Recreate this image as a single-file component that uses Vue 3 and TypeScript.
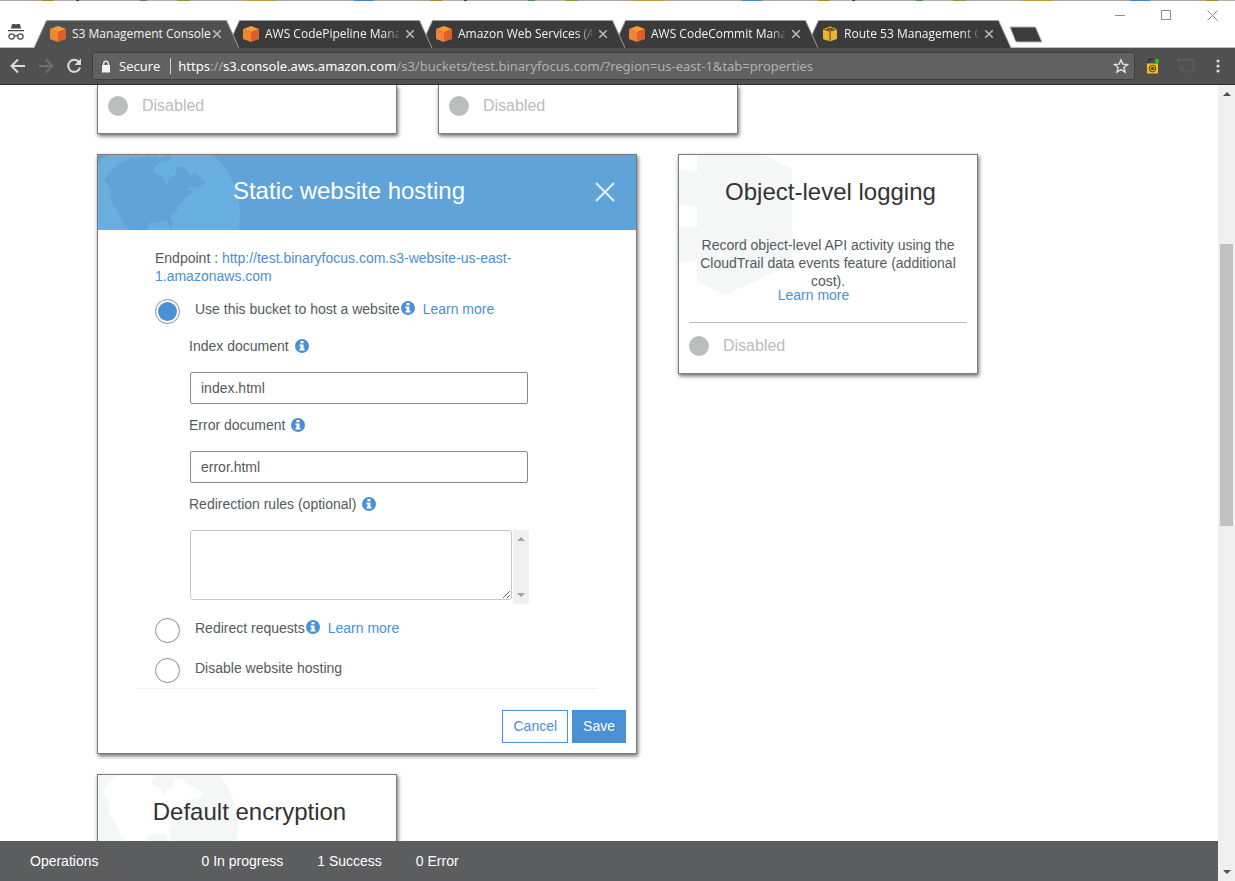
<script setup lang="ts">
import { defineComponent, h, ref } from 'vue'

interface Tab {
  title: string
  icon: 'cube' | 'box'
}

const tabs: Tab[] = [
  { title: 'S3 Management Console', icon: 'cube' },
  { title: 'AWS CodePipeline Management', icon: 'cube' },
  { title: 'Amazon Web Services (AWS)', icon: 'cube' },
  { title: 'AWS CodeCommit Management', icon: 'cube' },
  { title: 'Route 53 Management Console', icon: 'box' },
]

const hosting = ref('host')
const indexDocument = ref('index.html')
const errorDocument = ref('error.html')
const rules = ref('')

const LAND =
  'M42 300L60 276L78 258L96 246L112 240L128 232L146 236L152 228L164 236L172 226L186 231L200 227L208 238L222 228L240 226L240 241L225 240L228 249L214 243L205 250L192 262L190 276L200 282L212 285L222 296L228 315L237 302L235 290L250 291L259 279L257 261L276 262L290 268L304 286L316 279L330 292L348 309L336 315L326 322L302 320L290 330L312 331L309 341L294 347L286 355L274 368L262 378L262 392L250 400L240 408L247 425L247 445L241 447L234 428L222 424L206 429L192 425L178 432L173 450L178 470L150 480L118 449L104 430L96 416L110 449L102 440L88 410L85 395L68 375L62 355L65 335L55 318Z'

const Globe = defineComponent({
  setup: () => () =>
    h('svg', { viewBox: '24 225 450 450', 'aria-hidden': 'true' }, [
      h('circle', { class: 'sea', cx: 210, cy: 405, r: 240 }),
      h('path', { class: 'land', d: LAND }),
    ]),
})

const InfoIcon = defineComponent({
  setup: () => () =>
    h('svg', { viewBox: '0 0 14 14', 'aria-hidden': 'true' }, [
      h('circle', { cx: 7, cy: 7, r: 7, fill: '#4a90d4' }),
      h('path', { d: 'M5.5 2h3v2.200h-3zM4.500 5.400h4v4.400h1v1.800h-5V9.800h1V7.200h-1z', fill: '#fff' }),
    ]),
})
</script>

<template>
  <div class="window">
    <div class="desktop-strip"></div>
    <header class="titlebar">
      <div class="incognito">
        <svg width="18" height="18" viewBox="0 0 18 18" aria-hidden="true">
          <path d="M5.200 1h2.300l1.500.6L10.500 1h2.300l1.400 4.500H3.800zM1 7h16v1.300H1z" fill="#4a4a4a" />
          <g fill="none" stroke="#4a4a4a" stroke-width="1.200">
            <circle cx="4.600" cy="13.500" r="2.700" />
            <circle cx="13.400" cy="13.500" r="2.700" />
            <path d="M7.300 13.200q1.700-1.200 3.400 0" />
          </g>
        </svg>
      </div>
      <nav class="tabs" aria-label="Browser tabs">
        <div v-for="(tab, i) in tabs" :key="tab.title" class="tab" :class="{ active: i === 0 }" :style="{ zIndex: tabs.length - i }">
          <svg class="tab-shape" viewBox="0 0 205 28" aria-hidden="true">
            <path d="M0 28L12.500.5H192.500L205 28Z" />
            <path class="edge" d="M0 28L12.500.5H192.500L205 28" />
          </svg>
          <svg v-if="tab.icon === 'cube'" class="favicon" viewBox="0 0 16 16" aria-hidden="true">
            <path d="M8 0l8 3-8 3.200L0 3z" fill="#f69b35" />
            <path d="M0 3l8 3.200V16l-8-3z" fill="#f08536" />
            <path d="M16 3L8 6.200V16l8-3z" fill="#dd5f2a" />
          </svg>
          <svg v-else class="favicon" viewBox="0 0 16 16" aria-hidden="true">
            <path d="M1 3l7-2.500L15 3v10l-7 2.500L1 13z" fill="#e9b335" />
            <path d="M1 3l7 2 7-2M4.500 1.800l7 2.200M11.500 1.800L4.500 4M8 5v10.500" stroke="#5e4615" fill="none" />
          </svg>
          <button class="tab-title" type="button">{{ tab.title }}</button>
          <button class="tab-close" type="button" aria-label="Close tab">
            <svg width="8" height="8" viewBox="0 0 8 8"><path d="M0 0l8 8M8 0L0 8" stroke="#bcbcbc" stroke-width="1.500" /></svg>
          </button>
        </div>
      </nav>
      <button class="new-tab" type="button" aria-label="New tab">
        <svg width="34" height="17" viewBox="0 0 34 17">
          <path d="M1 1H26.500L33 16H8Q7 16 6.500 15Z" fill="#3c3c3c" stroke="#b8b8b8" />
        </svg>
      </button>
      <div class="window-controls">
        <button type="button" aria-label="Minimize"><svg width="11" height="11" viewBox="0 0 11 11"><path d="M0 5.500h10" stroke="#8a8a8a" /></svg></button>
        <button type="button" aria-label="Maximize"><svg width="11" height="11" viewBox="0 0 11 11"><path d="M.5.5h9v9h-9z" stroke="#8a8a8a" fill="none" /></svg></button>
        <button type="button" aria-label="Close"><svg width="11" height="11" viewBox="0 0 11 11"><path d="M.5.5l10 10M10.500.5l-10 10" stroke="#8a8a8a" /></svg></button>
      </div>
    </header>

    <div class="toolbar">
      <button class="nav-button" type="button" aria-label="Back">
        <svg width="16" height="16" viewBox="0 0 16 16"><path d="M15 8H2M8 1.500L1.500 8 8 14.500" stroke="#dcdcdc" stroke-width="2" fill="none" /></svg>
      </button>
      <button class="nav-button" type="button" aria-label="Forward">
        <svg width="16" height="16" viewBox="0 0 16 16"><path d="M1 8h13M8 1.500L14.500 8 8 14.500" stroke="#6f6f6f" stroke-width="2" fill="none" /></svg>
      </button>
      <button class="nav-button" type="button" aria-label="Reload">
        <svg width="16" height="16" viewBox="0 0 16 16">
          <path d="M13.300 4.600A6 6 0 1 0 14 9.500" stroke="#dcdcdc" stroke-width="2" fill="none" />
          <path d="M15 .5V7H8.500z" fill="#dcdcdc" />
        </svg>
      </button>
      <div class="omnibox">
        <svg class="lock" width="10" height="13" viewBox="0 0 10 13" aria-hidden="true">
          <path d="M1 5h8v7.500H1z" fill="#f4f4f4" /><path d="M2.700 6V3.500a2.300 2.300 0 0 1 4.600 0V6" stroke="#f4f4f4" stroke-width="1.300" fill="none" />
        </svg>
        <span class="secure">Secure</span>
        <div class="url" role="textbox" tabindex="0" aria-label="Address"><b>https</b>://<b>s3.console.aws.amazon.com</b>/s3/buckets/test.binaryfocus.com/?region=us-east-1&amp;tab=properties</div>
        <button class="star" type="button" aria-label="Bookmark this page">
          <svg width="16" height="16" viewBox="0 0 16 16"><path d="M8 1.800l1.800 4.300 4.700.4-3.600 3 1.200 4.600L8 11.600l-4.100 2.500 1.200-4.600-3.600-3 4.700-.4z" stroke="#e2e2e2" stroke-width="1.400" fill="none" /></svg>
        </button>
      </div>
      <div class="extensions">
        <button type="button" aria-label="Password extension">
          <svg width="16" height="16" viewBox="0 0 16 16">
            <path d="M3.500 6V3.500q0-2.500 4-2.500" stroke="#2f2f2f" stroke-width="1.600" fill="none" />
            <path d="M2 5.500h11v10H2z" fill="#efc11b" />
            <circle cx="7.500" cy="10.500" r="3.300" fill="none" stroke="#4c3c06" />
            <path d="M6.200 12V9.500h2.600V12M7.500 9.500V12" fill="none" stroke="#4c3c06" />
            <circle cx="12" cy="3" r="2.200" fill="#17c71c" />
          </svg>
        </button>
        <button type="button" aria-label="Cast">
          <svg width="18" height="16" viewBox="0 0 18 16" fill="none" stroke="#5e5e5e" stroke-width="1.500"><path d="M1.500 5V1.700h15v12H11M1.500 8a6 6 0 0 1 6 6M1.500 11a3 3 0 0 1 3 3" /></svg>
        </button>
        <button type="button" aria-label="Menu">
          <svg width="4" height="14" viewBox="0 0 4 14" fill="#dcdcdc"><circle cx="2" cy="2" r="1.600" /><circle cx="2" cy="7" r="1.600" /><circle cx="2" cy="12" r="1.600" /></svg>
        </button>
      </div>
    </div>

    <div class="viewport">
      <div class="page">
        <main class="content">
          <div class="row">
            <section class="card clipped"><p class="status"><i></i>Disabled</p></section>
            <section class="card clipped"><p class="status"><i></i>Disabled</p></section>
          </div>

          <div class="row">
            <section class="card wide">
              <header class="card-header">
                <Globe class="globe" />
                <h2>Static website hosting</h2>
                <button class="card-close" type="button" aria-label="Close">
                  <svg width="20" height="20" viewBox="0 0 20 20"><path d="M1 1l18 18M19 1L1 19" stroke="#e6f0f8" stroke-width="2" /></svg>
                </button>
              </header>
              <form class="hosting" @submit.prevent>
                <p class="endpoint">Endpoint : <a href="#">http://test.binaryfocus.com.s3-website-us-east-1.amazonaws.com</a></p>

                <div class="choice">
                  <input id="host" v-model="hosting" type="radio" name="hosting" value="host" />
                  <label for="host">Use this bucket to host a website</label>
                  <InfoIcon class="info tight" />
                  <a href="#">Learn more</a>
                </div>

                <div class="fields">
                  <div class="field">
                    <label for="index">Index document</label><InfoIcon class="info" />
                  </div>
                  <input id="index" v-model="indexDocument" type="text" />
                  <div class="field">
                    <label for="error">Error document</label><InfoIcon class="info" />
                  </div>
                  <input id="error" v-model="errorDocument" type="text" />
                  <div class="field">
                    <label for="rules">Redirection rules (optional)</label><InfoIcon class="info" />
                  </div>
                  <div class="rules">
                    <textarea id="rules" v-model="rules"></textarea>
                    <div class="mini-scroll">
                      <svg width="8" height="4" viewBox="0 0 8 4"><path d="M4 0l4 4H0z" fill="#a3a3a3" /></svg>
                      <svg width="8" height="4" viewBox="0 0 8 4"><path d="M0 0h8L4 4z" fill="#a3a3a3" /></svg>
                    </div>
                  </div>
                </div>

                <div class="choice">
                  <input id="redirect" v-model="hosting" type="radio" name="hosting" value="redirect" />
                  <label for="redirect">Redirect requests</label>
                  <InfoIcon class="info tight" />
                  <a href="#">Learn more</a>
                </div>
                <div class="choice last">
                  <input id="disable" v-model="hosting" type="radio" name="hosting" value="disable" />
                  <label for="disable">Disable website hosting</label>
                </div>
              </form>
              <hr class="divider" />
              <div class="actions">
                <button class="cancel" type="button">Cancel</button>
                <button class="save" type="button">Save</button>
              </div>
            </section>

            <section class="card logging">
              <svg class="bucket" width="113" height="140" viewBox="0 0 113 140" fill="#f5f7f7" aria-hidden="true">
                <path d="M18 0H85L113 14V109L46 140L18 127V105L6 108L0 106V72H18V51L0 50V16L5 15L18 17Z" />
              </svg>
              <h2>Object-level logging</h2>
              <p class="description">Record object-level API activity using the CloudTrail data events feature (additional cost).</p>
              <p class="more"><a href="#">Learn more</a></p>
              <p class="status"><i></i>Disabled</p>
            </section>
          </div>

          <div class="row">
            <section class="card encryption">
              <Globe class="globe" />
              <h2>Default encryption</h2>
            </section>
          </div>
        </main>

        <footer class="operations">
          <strong>Operations</strong>
          <span>0 In progress</span>
          <span>1 Success</span>
          <span>0 Error</span>
        </footer>
      </div>

      <div class="scrollbar" aria-hidden="true">
        <svg width="8" height="4" viewBox="0 0 8 4"><path d="M4 0l4 4H0z" fill="#505050" /></svg>
        <div class="track">
          <div class="thumb"></div>
        </div>
        <svg width="8" height="4" viewBox="0 0 8 4"><path d="M0 0h8L4 4z" fill="#505050" /></svg>
      </div>
    </div>
  </div>
</template>

<style>
body {
  margin: 0;
  overflow: hidden;
}
</style>

<style scoped>
* {
  box-sizing: border-box;
}
.window {
  display: flex;
  flex-direction: column;
  height: 100vh;
  background: #fff;
  font: 14px/18px "Liberation Sans", Arial, sans-serif;
  color: #545b5e;
}
button {
  padding: 0;
  border: 0;
  background: none;
  font: inherit;
  color: inherit;
}
svg {
  display: block;
  flex: none;
}
h2,
p {
  margin: 0;
}
h2 {
  font-size: 24px;
  line-height: 28px;
  font-weight: 400;
  text-align: center;
}
a {
  color: #4a90d4;
  text-decoration: none;
}

.desktop-strip {
  flex: none;
  height: 1px;
  background: repeating-linear-gradient(90deg, #a9a6a4 0 42px, #a58a2c 42px 54px, #b3b0ae 54px 76px, #3c3936 76px 79px, #a9a6a4 79px 140px, #4a8a4c 140px 147px, #b3b0ae 147px 177px, #7a9a34 177px 190px, #a9a6a4 190px 246px, #b99a3a 246px 276px, #a9a6a4 276px 354px, #4b87b4 354px 374px, #a9a6a4 374px 388px);
}
.titlebar {
  display: flex;
  flex: none;
  height: 47px;
  border-bottom: 1px solid #b9bfba;
  font: 12px/16px "Open Sans", "Noto Sans", sans-serif;
}
.incognito {
  flex: none;
  width: 34px;
  padding: 22px 0 0 7px;
}
.tabs {
  display: flex;
  padding-top: 19px;
}
.tab {
  position: relative;
  display: flex;
  align-items: center;
  width: 205px;
  height: 28px;
  margin-right: -12px;
  padding-left: 16px;
  color: #f2f2f2;
}
.tab-shape {
  position: absolute;
  inset: 0;
  width: 205px;
  height: 28px;
  fill: #3b3b3b;
}
.tab-shape .edge {
  fill: none;
  stroke: #9a9e9b;
}
.active .tab-shape {
  fill: #505050;
}
.favicon {
  position: relative;
  width: 16px;
  height: 16px;
}
.tab-title {
  position: relative;
  width: 134px;
  margin-left: 6px;
  overflow: hidden;
  white-space: nowrap;
  text-align: left;
  -webkit-mask-image: linear-gradient(90deg, #000 118px, transparent 138px);
  mask-image: linear-gradient(90deg, #000 118px, transparent 138px);
}
.active .tab-title {
  overflow: visible;
  -webkit-mask-image: none;
  mask-image: none;
}
.tab-close {
  position: relative;
  margin-left: 7px;
}
.new-tab {
  align-self: flex-start;
  margin: 25px 0 0 10px;
}
.window-controls {
  display: flex;
  align-items: flex-start;
  gap: 35px;
  margin-left: auto;
  padding: 9px 17px 0 0;
}

.toolbar {
  display: flex;
  flex: none;
  align-items: center;
  height: 37px;
  padding: 0 15px 0 10px;
  border-bottom: 1px solid #2d2d2d;
  background: #505050;
  font: 13px/18px "Open Sans", "Noto Sans", sans-serif;
}
.nav-button {
  margin-right: 12px;
}
.omnibox {
  display: flex;
  flex: 1;
  align-items: center;
  height: 28px;
  margin-left: -2px;
  padding: 0 5px 0 8px;
  border: 1px solid #3e3e3e;
  border-radius: 2px;
  background: #616161;
  color: #fff;
}
.secure {
  margin-left: 8px;
  padding-right: 10px;
  border-right: 1px solid #cfcfcf;
  line-height: 16px;
}
.url {
  flex: 1;
  min-width: 0;
  margin-left: 7px;
  overflow: hidden;
  white-space: nowrap;
  font-family: "Noto Sans", "Open Sans", sans-serif;
  color: #b0b0b0;
}
.url b {
  font-weight: 400;
  color: #fff;
}
.extensions {
  display: flex;
  align-items: center;
  margin-left: 10px;
}
.extensions button {
  margin-right: 16px;
}
.extensions button:last-child {
  margin: 0 0 0 5px;
}

.viewport {
  display: flex;
  flex: 1;
  min-height: 0;
}
.page {
  display: flex;
  flex: 1;
  flex-direction: column;
  min-width: 0;
}
.content {
  display: flex;
  flex: 1;
  flex-direction: column;
  gap: 20px;
  min-height: 0;
  padding-left: 97px;
  overflow: hidden;
}
.row {
  display: flex;
  flex: none;
  align-items: flex-start;
  gap: 41px;
}
.card {
  position: relative;
  width: 300px;
  border: 1px solid #7b7c7d;
  background: #fff;
  box-shadow: 1px 2px 4px rgba(0, 0, 0, 0.6);
}
.card h2 {
  position: relative;
  color: #333;
}
.status {
  display: flex;
  align-items: center;
  gap: 14px;
  font-size: 16px;
  line-height: 20px;
  color: #bbbdbd;
}
.status i {
  width: 20px;
  height: 20px;
  border-radius: 50%;
  background: #bcbebd;
}
.clipped {
  padding: 11px 10px 17px;
  border-top: 0;
}

.wide {
  width: 540px;
}
.card-header {
  position: relative;
  display: flex;
  align-items: flex-start;
  height: 75px;
  padding: 22px 21px 0 5px;
  overflow: hidden;
  background: #60a3d9;
}
.card .card-header h2 {
  flex: 1;
  color: #fff;
}
.card-close {
  margin-top: 5px;
}
.globe {
  position: absolute;
  top: 0;
  left: 0;
  width: 150px;
  height: 150px;
}
.globe :deep(.sea) {
  fill: #69b0e1;
}
.globe :deep(.land) {
  fill: #60a3d9;
}
.hosting {
  padding: 19px 107px 5px 57px;
}
.endpoint {
  margin-bottom: 14px;
}
.choice {
  display: flex;
  align-items: flex-start;
  height: 25px;
  line-height: 20px;
}
.choice input {
  flex: none;
  width: 25px;
  height: 25px;
  margin: 0 15px 0 0;
  border: 1px solid #8a8e90;
  border-radius: 50%;
  appearance: none;
  background: #fff;
}
.choice input:checked {
  padding: 2px;
  background: #4a90d4 content-box;
}
.choice.last {
  margin-top: 15px;
}
.info {
  width: 14px;
  height: 14px;
  margin-left: 6px;
}
.info.tight {
  margin: 2px 8px 0 1px;
}
.fields {
  padding: 1px 0 14px 35px;
}
.field {
  display: flex;
  align-items: center;
  margin: 12px 0 17px -1px;
}
.fields input {
  display: block;
  width: 338px;
  height: 32px;
  padding: 0 10px;
  border: 1px solid #85898c;
  border-radius: 2px;
  background: #fff;
  font: inherit;
  color: inherit;
}
.rules {
  display: flex;
  align-items: flex-start;
}
.rules textarea {
  width: 322px;
  height: 70px;
  margin: 0 1px 0 0;
  padding: 6px 10px;
  border: 1px solid #c5c7c8;
  border-radius: 3px;
  font: inherit;
  color: inherit;
  resize: both;
}
.mini-scroll {
  display: flex;
  flex-direction: column;
  align-items: center;
  justify-content: space-between;
  width: 16px;
  height: 74px;
  padding: 7px 0;
  background: #f0f0f0;
}
.divider {
  height: 1px;
  margin: 0 38px;
  border: 0;
  background: #f0f1f1;
}
.actions {
  display: flex;
  justify-content: flex-end;
  gap: 4px;
  padding: 21px 10px 10px;
}
.actions button {
  height: 33px;
  padding: 0 10px 1px;
  border: 1px solid #4a90d4;
  color: #4a90d4;
}
.actions .save {
  background: #4a90d4;
  color: #fff;
}

.logging {
  padding: 23px 10px 17px;
}
.bucket {
  position: absolute;
  top: 0;
  left: 0;
}
.logging h2 {
  padding-left: 5px;
}
.description {
  position: relative;
  margin-top: 30px;
  text-align: center;
}
.more {
  position: relative;
  padding: 0 29px 22px 0;
  border-bottom: 1px solid #bcbebd;
  line-height: 10px;
  text-align: center;
}
.logging .status {
  margin-top: 13px;
}

.encryption {
  height: 220px;
  padding-top: 23px;
  overflow: hidden;
}
.encryption h2 {
  padding-left: 5px;
}
.encryption .globe {
  top: -8px;
  left: -2px;
}
.encryption .globe :deep(.sea) {
  fill: #f5f7f7;
}
.encryption .globe :deep(.land) {
  fill: #fff;
}

.operations {
  display: flex;
  flex: none;
  align-items: center;
  gap: 34px;
  height: 40px;
  padding-left: 30px;
  background: #5c5d5f;
  color: #fff;
}
.operations strong {
  margin-right: 69px;
  font-weight: 400;
}

.scrollbar {
  display: flex;
  flex: none;
  flex-direction: column;
  align-items: center;
  width: 17px;
  padding: 7px 0;
  background: #f0f0f0;
}
.track {
  display: flex;
  flex: 1;
  flex-direction: column;
  width: 13px;
  padding: 6px 0;
}
.track::before {
  content: "";
  flex: 142;
}
.thumb {
  flex: 282;
  background: #c1c1c1;
}
.track::after {
  content: "";
  flex: 338;
}
</style>
